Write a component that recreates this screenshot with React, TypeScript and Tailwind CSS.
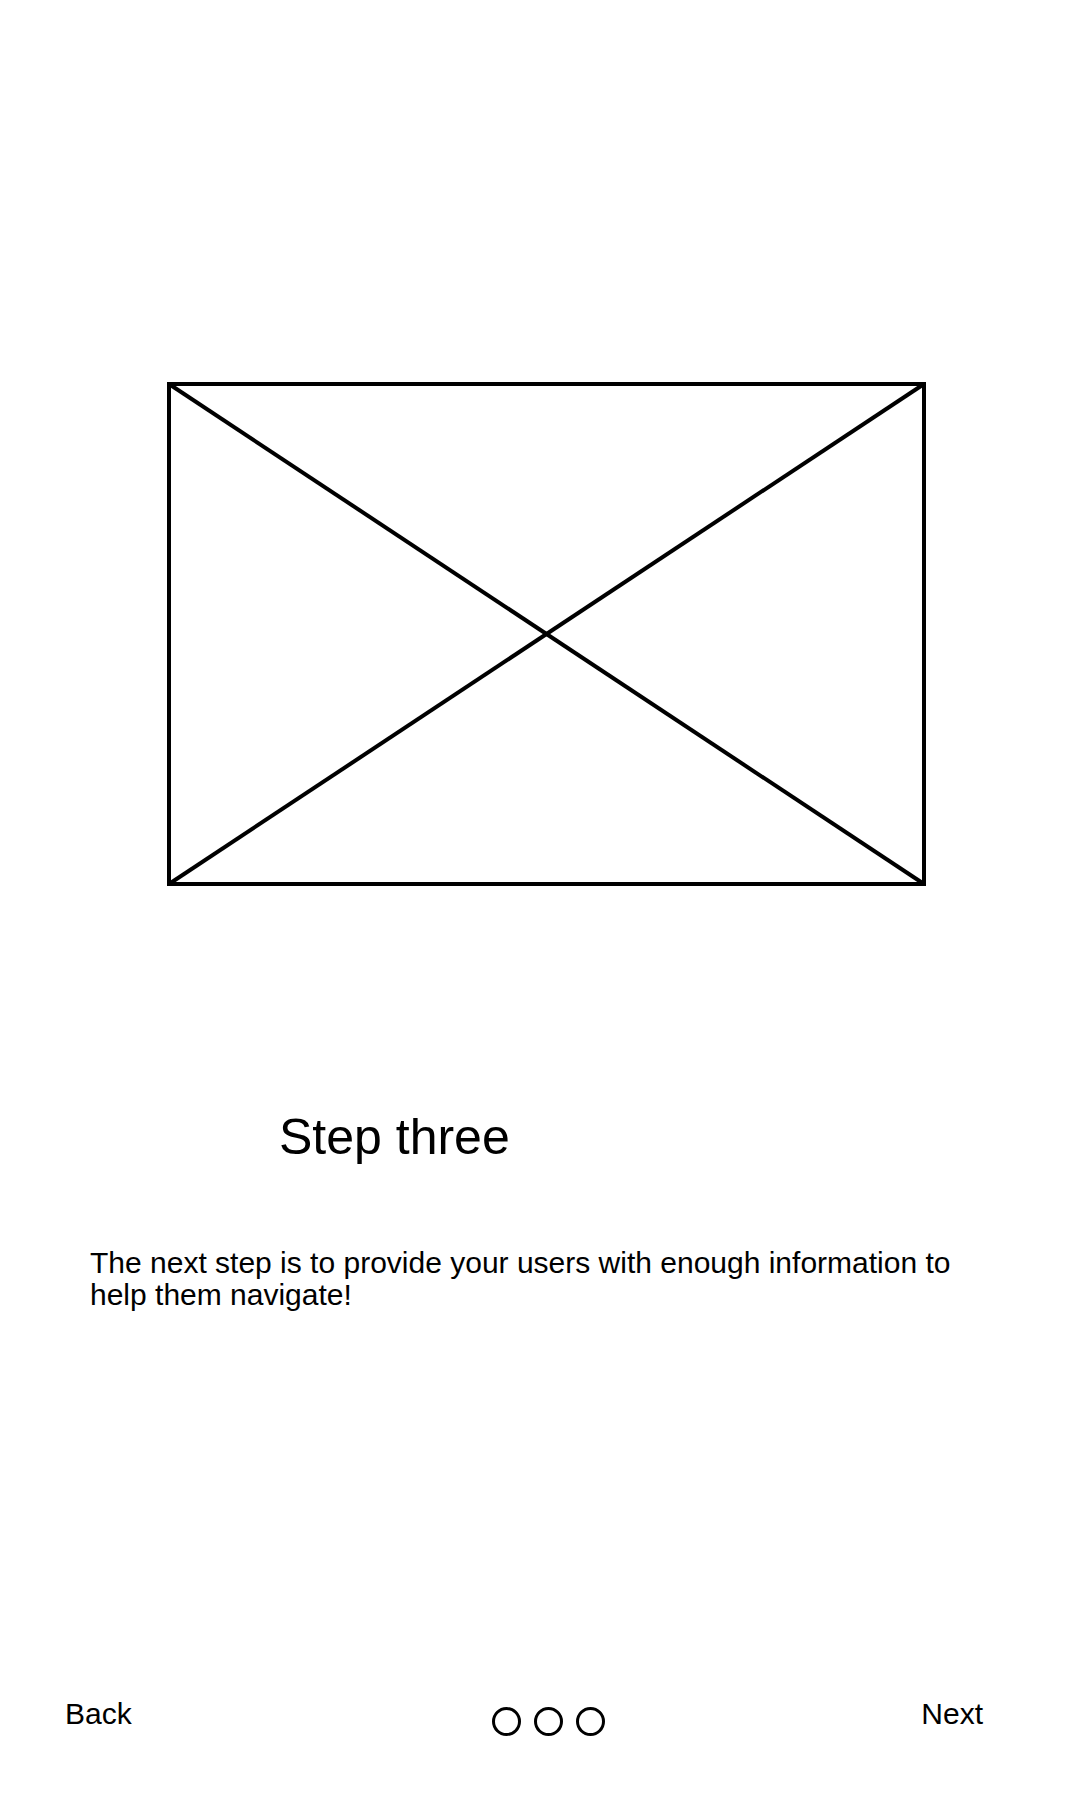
import React from "react";

export default function App() {
  return (
    <div className="w-[1080px] h-[1800px] bg-white text-black flex flex-col" style={{ fontFamily: '"Liberation Sans", Arial, sans-serif' }}>
      <div className="mt-[382px] ml-[167px] w-[759px] h-[504px]">
        <svg width="759" height="504" viewBox="0 0 759 504">
          <rect x="2" y="2" width="755" height="500" fill="none" stroke="#000" strokeWidth="4" />
          <line x1="2" y1="2" x2="757" y2="502" stroke="#000" strokeWidth="4" />
          <line x1="757" y1="2" x2="2" y2="502" stroke="#000" strokeWidth="4" />
        </svg>
      </div>
      <div className="mt-[224px] ml-[279px] text-[50px] leading-[55px]">Step three</div>
      <p className="mt-[82px] ml-[90px] w-[900px] text-[30px] leading-[32px]">
        The next step is to provide your users with enough information to help them navigate!
      </p>
      <div className="mt-auto mb-[64px] flex items-start">
        <div className="ml-[65px] w-[427px] text-[30px] leading-[35px]">Back</div>
        <div className="mt-[11px] flex gap-[13px]">
          <div className="w-[29px] h-[29px] rounded-full border-[3px] border-black" />
          <div className="w-[29px] h-[29px] rounded-full border-[3px] border-black" />
          <div className="w-[29px] h-[29px] rounded-full border-[3px] border-black" />
        </div>
        <div className="ml-auto mr-[97px] text-[30px] leading-[35px]">Next</div>
      </div>
    </div>
  );
}
